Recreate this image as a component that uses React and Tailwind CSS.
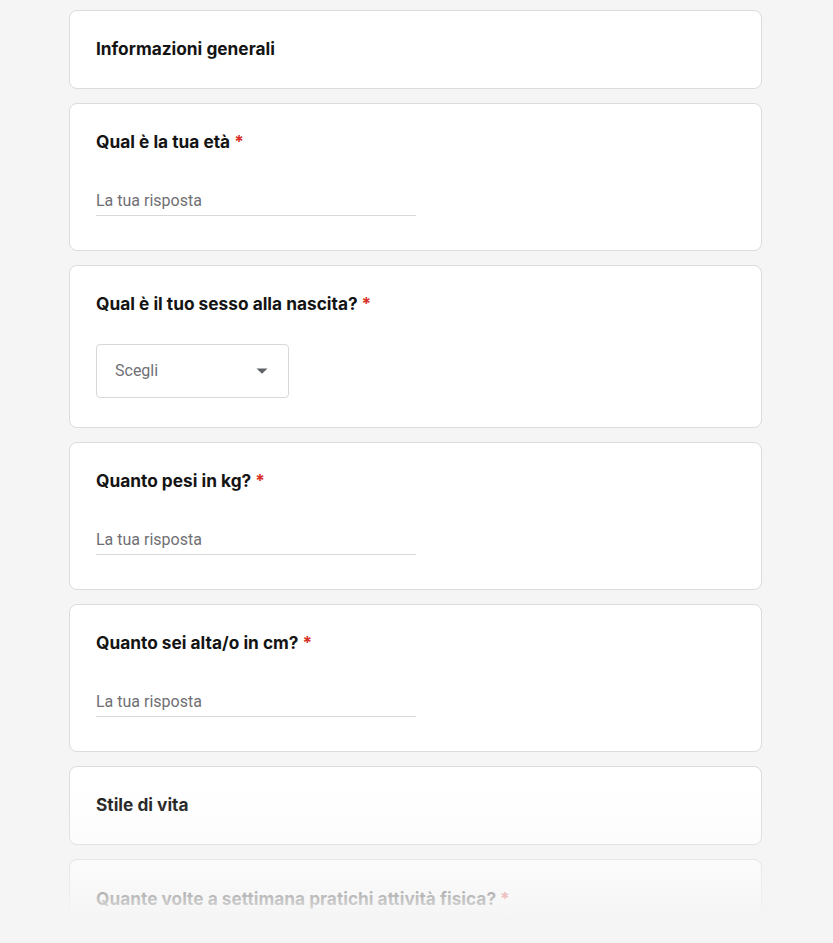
import React from "react";

const Star = () => <span className="text-[#d93025] ml-[4px]">*</span>;

function Section({ title }) {
  return (
    <div className="bg-white border border-[#dcdcdc] rounded-[8px] px-[26px] pt-[26px] pb-[27px]">
      <div className="text-[17.3px] leading-[24px] font-bold text-[#141414]">{title}</div>
    </div>
  );
}

function TextQ({ title }) {
  return (
    <div className="bg-white border border-[#dcdcdc] rounded-[8px] px-[26px] pt-[26px] pb-[34px]">
      <div className="text-[17.3px] leading-[24px] font-bold text-[#141414]">
        {title}
        <Star />
      </div>
      <div className="mt-[30px] w-[320px] h-[32px] border-b border-[#dadada] flex items-center pt-[2px]">
        <span className="font-['Roboto',sans-serif] text-[16px] text-[#6f6f74]">La tua risposta</span>
      </div>
    </div>
  );
}

function SelectQ({ title }) {
  return (
    <div className="bg-white border border-[#dcdcdc] rounded-[8px] px-[26px] pt-[26px] pb-[29px]">
      <div className="text-[17.3px] leading-[24px] font-bold text-[#141414]">
        {title}
        <Star />
      </div>
      <div className="mt-[28px] w-[193px] h-[54px] border border-[#d8d8d8] rounded-[4px] flex items-center justify-between pl-[18px] pr-[20px]">
        <span className="font-['Roboto',sans-serif] text-[16px] text-[#6f6f74]">Scegli</span>
        <svg width="12" height="6" viewBox="0 0 12 6"><path d="M0.5 0.5h11L6 5.8z" fill="#5f6368" /></svg>
      </div>
    </div>
  );
}

export default function App() {
  return (
    <div className="relative w-[833px] h-[943px] overflow-hidden bg-[#f5f5f5] font-['Inter',sans-serif]">
      <div className="w-[693px] ml-[69px] pt-[10px] flex flex-col gap-[14px]">
        <Section title="Informazioni generali" />
        <TextQ title="Qual è la tua età" />
        <SelectQ title="Qual è il tuo sesso alla nascita?" />
        <TextQ title="Quanto pesi in kg?" />
        <TextQ title="Quanto sei alta/o in cm?" />
        <Section title="Stile di vita" />
        <div className="bg-white border border-[#dcdcdc] rounded-[8px] px-[26px] pt-[27px] pb-[34px]">
          <div className="text-[17.3px] leading-[24px] font-bold text-[#141414]">
            Quante volte a settimana pratichi attività fisica?
            <Star />
          </div>
          <div className="h-[60px]" />
        </div>
      </div>
      <div className="absolute left-0 right-0 bottom-[25px] h-[135px] bg-gradient-to-b from-[#f5f5f5]/0 via-[#f5f5f5]/30 via-50% to-[#f5f5f5]/95" />
      <div className="absolute left-0 right-0 bottom-0 h-[25px] bg-[#f5f5f5]" />
    </div>
  );
}
